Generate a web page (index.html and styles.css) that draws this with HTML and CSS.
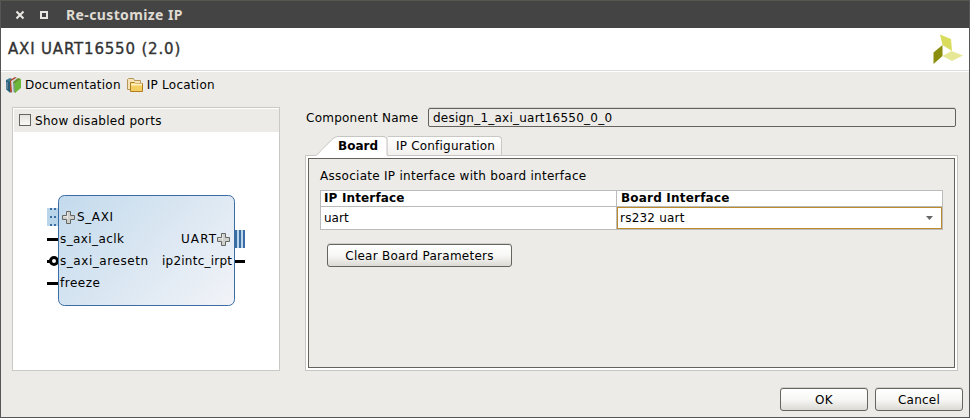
FILE: index.html
```html
<!DOCTYPE html>
<html lang="en">
<head>
<meta charset="utf-8">
<title>Re-customize IP</title>
<link rel="stylesheet" href="styles.css">
</head>
<body>
<div class="window">
  <header class="titlebar">
    <svg class="win-icons" width="34" height="14" viewBox="0 0 34 14"><path d="M.5 3.500l7 7M7.500 3.500l-7 7" stroke="#e9e7e2" stroke-width="2" fill="none"/><rect x="25" y="4" width="6" height="6" fill="none" stroke="#e9e7e2" stroke-width="2"/></svg>
    <span class="win-title">Re-customize IP</span>
  </header>
  <div class="heading">
    <h1>AXI UART16550 (2.0)</h1>
    <svg class="logo" width="31" height="31" viewBox="0 0 31 31"><path d="M7 .5L18 5l1 12-9.500-6z" fill="#d9dc5c"/><path d="M9.500 11v11l-9 8V18.500z" fill="#8b8d0d"/><path d="M9.500 22l9-5L30 21.500 19 27z" fill="#e6e896"/></svg>
  </div>
  <nav class="toolbar">
    <span class="tool">
      <svg class="books" width="17" height="18" viewBox="0 0 17 18"><path d="M1 4l4-2 2 1v13l-2 .8L1 13z" fill="#397d96"/><path d="M1 4l4 2v10.500L1 13z" fill="#285e78"/><path d="M5 4l5-3 2 1-5 3.500v11L5 15.500z" fill="#b0452a"/><path d="M6 5l5-3 2 1-4 3v11l-2-1z" fill="#d4d8df"/><path d="M8 6l5-4 3 1-5 4v10l-2-1z" fill="#65902e"/><path d="M10 7l6-4v9l-6 5z" fill="#69b83a"/><path d="M2 6v7M9 7v9" stroke="#92aac0"/></svg>
      <span class="t-doc">Documentation</span>
    </span>
    <span class="tool">
      <svg class="folder" width="17" height="16" viewBox="0 0 17 16"><path d="M.5 12.500v-10l1-1h5l1 2h6v9z" fill="#f4e3b7" stroke="#b69657"/><path d="M3.500 5.500h4l1 1h7v8h-12z" fill="#f5ce62" stroke="#b17d22"/><path d="M4 7.500h11" stroke="#fff1bc" stroke-width="2"/></svg>
      <span class="t-loc">IP Location</span>
    </span>
  </nav>
  <main class="content">
    <section class="preview">
      <label class="ports"><span class="check"></span><span class="t-ports">Show disabled ports</span></label>
      <svg class="diagram" width="266" height="238" viewBox="13 132 266 238">
        <defs>
          <linearGradient id="blk" gradientUnits="userSpaceOnUse" x1="70" y1="190" x2="210" y2="320"><stop offset="0" stop-color="#c4dbed"/><stop offset="1" stop-color="#f0f2f7"/></linearGradient>
          <g id="plus"><path d="M4.500.5h4v4h4v4h-4v4h-4v-4h-4v-4h4z" fill="#cfcfcb" stroke="#666963"/><path d="M5.500 8V1.500M1.500 5.500H5" stroke="#e6e6e3"/></g>
        </defs>
        <rect x="58.500" y="195.500" width="176" height="110" rx="6" fill="url(#blk)" stroke="#3b6ca3"/>
        <rect x="47" y="208" width="11" height="18" fill="#b8d5ea"/>
        <path d="M50 209h2m2 0h2M50 217h2m2 0h2M50 225h2m2 0h2" stroke="#3b6ca3" stroke-width="2"/>
        <path d="M47 239.500h11M47 261.500h3M47 283.500h11M235 261.500h10" stroke="#000" stroke-width="3"/>
        <circle cx="54" cy="261" r="3.500" fill="#fff" stroke="#000" stroke-width="3"/>
        <path d="M58.500 250v30" stroke="#3b6ca3"/>
        <rect x="235" y="230" width="10" height="18" fill="#b8d5ea"/>
        <path d="M236 230v18M240 230v18M244 230v18" stroke="#3b6ca3" stroke-width="2"/>
        <use href="#plus" x="62" y="211"/><use href="#plus" x="217" y="233"/>
        <g class="pins">
          <text x="77" y="221" textLength="36">S_AXI</text>
          <text x="60" y="243" textLength="64">s_axi_aclk</text>
          <text x="60" y="265" textLength="88">s_axi_aresetn</text>
          <text x="60" y="287" textLength="40">freeze</text>
          <text x="181" y="243" textLength="35">UART</text>
          <text x="162" y="265" textLength="70">ip2intc_irpt</text>
        </g>
      </svg>
    </section>
    <section class="config">
      <div class="name-row"><span class="name-label">Component Name</span><div class="name-field">design_1_axi_uart16550_0_0</div></div>
      <div class="tabs">
        <div class="tab active"><svg class="tab-shape" width="74" height="21" viewBox="0 0 74 21"><path d="M0 21v-1.500c4 0 5-3 8-6L18 3.500q3-3 6-3h45q4 0 4 3V21z" fill="#fff"/><path d="M0 19.500c4 0 5-3 8-6L18 3.500q3-3 6-3h45q4 0 4 3V19" fill="none" stroke="#c6c5c2"/></svg><span class="tab-text">Board</span></div>
        <div class="tab other">IP Configuration</div>
      </div>
      <div class="pane"><div class="pane-inner">
        <p class="hint">Associate IP interface with board interface</p>
        <div class="grid">
          <div class="cell head">IP Interface</div><div class="cell head t-board">Board Interface</div>
          <div class="cell">uart</div>
          <div class="combo"><span>rs232 uart</span><svg width="7" height="4" viewBox="0 0 7 4"><path d="M0 0h7L3.500 4z" fill="#666"/></svg></div>
        </div>
        <button class="btn clear">Clear Board Parameters</button>
      </div></div>
    </section>
  </main>
  <footer class="actions"><button class="btn ok">OK</button><button class="btn cancel">Cancel</button></footer>
</div>
</body>
</html>
```
FILE: styles.css
```css
* { box-sizing: border-box; }
body {
  margin: 0;
  font: 12px/16px "DejaVu Sans", sans-serif;
  color: #000;
}
.window {
  display: flex;
  flex-direction: column;
  width: 970px;
  height: 418px;
  background: #ecebe7;
  border: solid #565656;
  border-width: 0 1px 1px;
}
.titlebar {
  display: flex;
  align-items: center;
  height: 28px;
  padding-left: 15px;
  background: #444;
  border-top: 1px solid #58574f;
}
.win-title {
  margin-left: 16px;
  font: bold 14px/20px "Noto Sans", sans-serif;
  letter-spacing: .38px;
  color: #dfdbd2;
}
.heading {
  display: flex;
  justify-content: space-between;
  height: 43px;
  padding: 6px 5px 0 7px;
  background: #fff;
  border-bottom: 1px solid #dddcd8;
}
h1 {
  margin: 5px 0 0;
  font-size: 15px;
  font-weight: normal;
  line-height: 20px;
  letter-spacing: .82px;
  color: #333;
  -webkit-text-stroke: .35px #333;
}
.toolbar {
  display: flex;
  gap: 7px;
  height: 36px;
  padding: 4px 0 0 5px;
  border-top: 1px solid #fff;
}
.tool { display: flex; align-items: center; height: 18px; gap: 2px; }
.books, .folder { margin: 0 1px 0 -1px; }
.t-doc, .t-loc { letter-spacing: .25px; }
.content { display: flex; height: 264px; padding-left: 11px; }
.preview {
  width: 268px;
  height: 264px;
  border: 1px solid #c9c9c6;
  background: #fff;
}
.ports {
  display: flex;
  align-items: center;
  gap: 4px;
  height: 24px;
  padding-left: 5px;
  background: #ecebe7;
  border: solid #fff;
  border-width: 1px 0 0 1px;
}
.check {
  width: 12px;
  height: 12px;
  margin-top: -1px;
  border: 1px solid #66645f;
  background: linear-gradient(#e5e4e0, #f8f8f7);
}
.t-ports { letter-spacing: .28px; }
.diagram { display: block; }
.pins { font-size: 12px; }
.config { width: 653px; margin-left: 25px; }
.name-row { display: flex; align-items: center; height: 20px; }
.name-label { width: 123px; padding: 2px 0 0 1px; letter-spacing: .25px; }
.name-field {
  width: 528px;
  height: 19px;
  padding: 1px 4px;
  border: 1px solid #63625d;
  border-radius: 2px;
  box-shadow: 0 -1px #d3d2ce;
  letter-spacing: .23px;
}
.tabs { display: flex; height: 28px; padding: 9px 0 0 9px; }
.tab { height: 20px; }
.tab.active {
  display: grid;
  width: 74px;
  z-index: 1;
  font-weight: bold;
}
.tab-shape, .tab-text { grid-area: 1 / 1; }
.tab-text { padding: 2px 0 0 24px; }
.tab.other {
  width: 114px;
  height: 19px;
  padding: 1px 0 0 8px;
  border: 1px solid #c9c8c5;
  border-width: 1px 1px 0 0;
  border-radius: 0 4px 0 0;
  background: linear-gradient(#fff, #f1f0ed);
  letter-spacing: .2px;
}
.pane {
  height: 216px;
  padding: 2px 2px 2px;
  background: #fff;
  border: 1px solid #c6c5c2;
}
.pane-inner {
  height: 210px;
  padding: 9px 10px 0;
  background: #ecebe7;
  border: 1px solid #63625d;
}
.hint { margin: 0; padding-left: 1px; letter-spacing: .28px; }
.grid {
  display: grid;
  grid-template-columns: 295px 325px;
  grid-template-rows: 15px 22px;
  gap: 1px;
  width: 623px;
  margin: 6px 0 14px 1px;
  padding: 1px;
  background: #bbb;
}
.cell { padding: 3px 3px 0; background: #fff; }
.head { padding-top: 0; line-height: 15px; font-weight: bold; }
.t-board { padding-left: 4px; letter-spacing: .2px; }
.head:first-child { letter-spacing: .15px; }
.combo {
  display: flex;
  justify-content: space-between;
  align-items: center;
  padding: 0 8px 1px 2px;
  background: #fff;
  border: 1px solid #bc8b2b;
  letter-spacing: .22px;
}
.btn {
  padding: 0;
  font: inherit;
  letter-spacing: .25px;
  height: 23px;
  border: 1px solid #66645e;
  border-radius: 3px;
  background: linear-gradient(#fff, #f7f7f5 50%, #dbdad4);
  box-shadow: 0 -1px #d0cfcb;
}
.clear { display: block; width: 185px; margin-left: 8px; }
.actions {
  display: flex;
  justify-content: flex-end;
  gap: 7px;
  padding: 17px 6px 0 0;
}
.ok, .cancel { width: 88px; }
```
